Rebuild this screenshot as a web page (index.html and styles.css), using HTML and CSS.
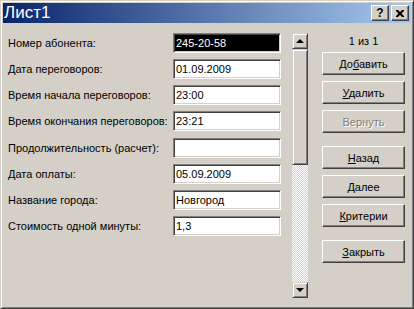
FILE: index.html
```html
<!doctype html>
<html>
    <head>
        <meta charset="utf-8">
        <meta name="viewport" content="width=device-width,initial-scale=1">
        <title>Лист1</title>
        <link rel="stylesheet" href="styles.css">
    </head>
    <body>
        <div class="window">
            <div class="caption">
                <span class="caption-title">Лист1</span>
                <div class="caption-buttons">
                    <button class="cap-btn help">?</button>
                    <button class="cap-btn close">
                        <svg width="8" height="7" viewBox="0 0 8 7">
                            <path d="M0 0h2l2 2l2-2h2v1l-2.5 2.5L8 6v1H6L4 5L2 7H0V6l2.5-2.5L0 1z" fill="#000"/>
                        </svg>
                    </button>
                </div>
            </div>
            <div class="client">
                <div class="fields">
                    <label for="f1">Номер абонента:</label>
                    <input type="text" id="f1" class="selected" value="245-20-58">
                    <label for="f2">Дата переговоров:</label>
                    <input type="text" id="f2" value="01.09.2009">
                    <label for="f3">Время начала переговоров:</label>
                    <input type="text" id="f3" value="23:00">
                    <label for="f4">Время окончания переговоров:</label>
                    <input type="text" id="f4" value="23:21">
                    <label for="f5">Продолжительность (расчет):</label>
                    <input type="text" id="f5" value="">
                    <label for="f6">Дата оплаты:</label>
                    <input type="text" id="f6" value="05.09.2009">
                    <label for="f7">Название города:</label>
                    <input type="text" id="f7" value="Новгород">
                    <label for="f8">Стоимость одной минуты:</label>
                    <input type="text" id="f8" value="1,3">
                </div>
                <div class="scrollbar">
                    <div class="sb-btn"><span class="arrow up"></span></div>
                    <div class="sb-thumb"></div>
                    <div class="sb-track"></div>
                    <div class="sb-btn"><span class="arrow down"></span></div>
                </div>
                <div class="actions">
                    <div class="counter">1 из 1</div>
                    <button class="btn">До<u>б</u>авить</button>
                    <button class="btn"><u>У</u>далить</button>
                    <button class="btn" disabled>Вернуть</button>
                    <button class="btn group"><u>Н</u>азад</button>
                    <button class="btn"><u>Д</u>алее</button>
                    <button class="btn"><u>К</u>ритерии</button>
                    <button class="btn group"><u>З</u>акрыть</button>
                </div>
            </div>
        </div>
    </body>
</html>
```

FILE: styles.css
```css
body {
    margin: 0;
    background: #D4D0C8;
    font-family: Tahoma, "Liberation Sans", Arial, sans-serif;
    font-size: 11px;
    color: #000;
}
.window {
    width: 414px;
    height: 309px;
    box-sizing: border-box;
    display: flex;
    flex-direction: column;
    background: #D4D0C8;
    border: 1px solid;
    border-color: #D4D0C8 #404040 #404040 #D4D0C8;
    box-shadow: inset 1px 1px #fff, inset -1px -1px #808080;
    padding: 2px;
}
.caption {
    height: 20px;
    display: flex;
    align-items: center;
    justify-content: space-between;
    padding: 0 2px 0 1px;
    background: linear-gradient(to right, #0A246A, #A6CAF0);
}
.caption-title {
    color: #fff;
    font-size: 17px;
    line-height: 20px;
}
.caption-buttons {
    display: flex;
    gap: 2px;
}
.cap-btn {
    width: 18px;
    height: 16px;
    padding: 0;
    display: flex;
    align-items: center;
    justify-content: center;
    background: #D4D0C8;
    border: 1px solid;
    border-color: #fff #404040 #404040 #fff;
    box-shadow: inset -1px -1px #808080, inset 1px 1px #D4D0C8;
    font-family: inherit;
    font-size: 12px;
    font-weight: bold;
    color: #000;
}
.client {
    flex: 1;
    display: flex;
    padding: 10px 0 8px 5px;
}
.fields {
    display: grid;
    grid-template-columns: 165px 108px;
    grid-auto-rows: 20px;
    row-gap: 6.14px;
    align-items: center;
    align-content: start;
}
.fields label {
    white-space: nowrap;
}
.fields input {
    height: 20px;
    box-sizing: border-box;
    margin: 0;
    padding: 0 2px;
    font: inherit;
    color: #000;
    background: #fff;
    border: 1px solid;
    border-color: #808080 #fff #fff #808080;
    box-shadow: inset 1px 1px #404040, inset -1px -1px #D4D0C8;
    outline: none;
}
.fields input.selected {
    background: #000;
    color: #fff;
}
.scrollbar {
    width: 16px;
    margin-left: 11px;
    display: flex;
    flex-direction: column;
}
.sb-btn,
.sb-thumb {
    box-sizing: border-box;
    background: #D4D0C8;
    border: 1px solid;
    border-color: #D4D0C8 #404040 #404040 #D4D0C8;
    box-shadow: inset 1px 1px #fff, inset -1px -1px #808080;
}
.sb-btn {
    height: 16px;
    display: flex;
    align-items: center;
    justify-content: center;
}
.sb-thumb {
    height: 116px;
}
.sb-track {
    flex: 1;
    background: repeating-conic-gradient(#fff 0 25%, #D4D0C8 0 50%) 0 0 / 2px 2px;
}
.arrow {
    width: 0;
    height: 0;
    border-left: 4px solid transparent;
    border-right: 4px solid transparent;
}
.arrow.up {
    border-bottom: 4px solid #000;
}
.arrow.down {
    border-top: 4px solid #000;
}
.actions {
    width: 83px;
    margin-left: 14px;
    display: flex;
    flex-direction: column;
}
.counter {
    height: 19px;
    line-height: 17px;
    text-align: center;
}
.btn {
    height: 23px;
    margin-top: 6px;
    padding: 0;
    background: #D4D0C8;
    border: 1px solid;
    border-color: #fff #404040 #404040 #fff;
    box-shadow: inset -1px -1px #808080, inset 1px 1px #D4D0C8;
    font: inherit;
    color: #000;
    text-align: center;
}
.counter + .btn {
    margin-top: 0;
}
.btn.group {
    margin-top: 13px;
}
.btn:disabled {
    color: #808080;
    text-shadow: 1px 1px #fff;
}
```
